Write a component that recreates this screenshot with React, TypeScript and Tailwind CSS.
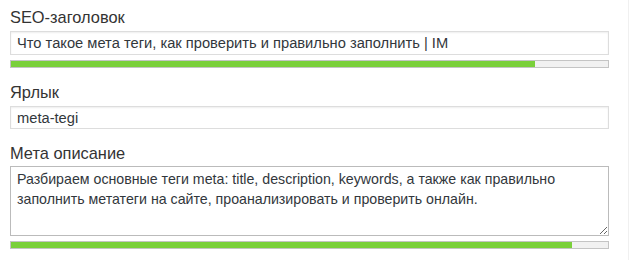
const font = { fontFamily: '"Liberation Sans", Arial, sans-serif' };

function Bar({ value }: { value: number }) {
  return (
    <div className="mt-[5px] h-[8px] w-[599px] border border-[#c4c4c4] bg-[#f1f1f1]">
      <div className="h-full bg-[#7ad03a]" style={{ width: `${value}px` }} />
    </div>
  );
}

function Label({ children }: { children: React.ReactNode }) {
  return <label className="block text-[16.4px] leading-[20px] text-[#333]">{children}</label>;
}

export default function App() {
  return (
    <div className="min-h-[260px] w-[629px] border-r border-[#f0f0f0] bg-white pl-[10px] pt-[7px]" style={font}>
      <Label>SEO-заголовок</Label>
      <input
        className="mt-[4px] block h-[24px] w-[599px] border border-[#ddd] px-[6px] text-[14.7px] text-[#32373c] shadow-[inset_0_1px_2px_rgba(0,0,0,0.07)] outline-none"
        defaultValue="Что такое мета теги, как проверить и правильно заполнить | IM"
      />
      <Bar value={524} />

      <div className="mt-[14px]">
        <Label>Ярлык</Label>
      </div>
      <input
        className="mt-[4px] block h-[23px] w-[599px] border border-[#ddd] px-[6px] text-[14.7px] text-[#32373c] shadow-[inset_0_1px_2px_rgba(0,0,0,0.07)] outline-none"
        defaultValue="meta-tegi"
      />

      <div className="mt-[14px]">
        <Label>Мета описание</Label>
      </div>
      <textarea
        className="mt-[3px] block h-[70px] w-[599px] border border-[#bbb] px-[6px] pt-[2px] text-[14.2px] leading-[20px] text-[#32373c] outline-none"
        defaultValue="Разбираем основные теги meta: title, description, keywords, а также как правильно заполнить метатеги на сайте, проанализировать и проверить онлайн."
      />
      <Bar value={561} />
    </div>
  );
}
